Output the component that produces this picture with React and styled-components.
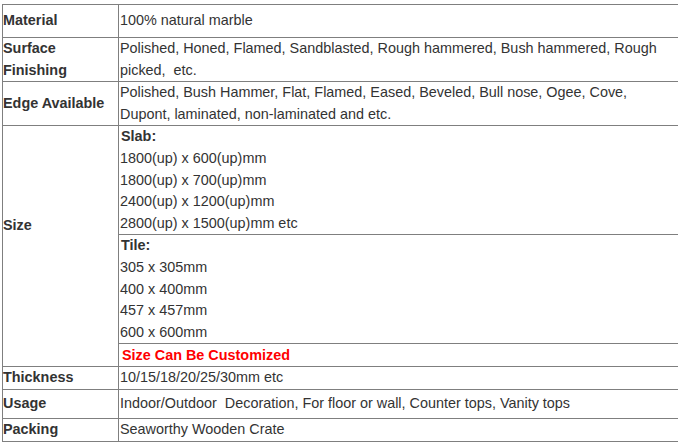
import React from 'react'
import styled, { createGlobalStyle } from 'styled-components'

const GlobalStyle = createGlobalStyle`
    html, body {
        margin: 0;
        padding: 0;
        background: #fff;
        overflow: hidden;
    }
    body {
        font-family: "Liberation Sans", Arial, sans-serif;
        font-size: 14.4px;
        color: #333;
    }
`

const Page = styled.div`
    padding: 4px 0 0 2px;
`

const Spec = styled.div`
    display: grid;
    grid-template-columns: 116px 1fr;
    width: 700px;
    border-top: 1px solid #7f7f7f;
    border-left: 1px solid #7f7f7f;
    line-height: 21.6px;
`

const Cell = styled.div`
    box-sizing: border-box;
    min-height: ${props => props.$h}px;
    border-right: 1px solid #7f7f7f;
    border-bottom: 1px solid #7f7f7f;
    display: flex;
    flex-direction: column;
    justify-content: center;
`

const Label = styled(Cell)`
    font-weight: bold;
    padding: 0 0 ${props => props.$lift || 0}px 0;
`

const Value = styled(Cell)`
    padding: 0 28px 0 1px;
    justify-content: ${props => props.$stack ? 'stretch' : 'center'};
`

const SizeBlock = styled.div`
    box-sizing: border-box;
    height: ${props => props.$h}px;
    border-bottom: ${props => props.$last ? 'none' : '1px solid #7f7f7f'};
    margin: 0 -28px 0 -1px;
    padding: 0 28px 0 1px;
    display: flex;
    flex-direction: column;
    justify-content: center;
`

const SubHead = styled.div`
    font-weight: bold;
    padding-left: 1px;
`

const Note = styled.div`
    font-weight: bold;
    color: #ff0000;
    padding-left: 2px;
`

const rows = [
    { label: 'Material', h: 33, value: '100% natural marble' },
    {
        label: 'Surface Finishing',
        h: 44,
        value: 'Polished, Honed, Flamed, Sandblasted, Rough hammered, Bush hammered, Rough picked,\u00a0 etc.',
    },
    {
        label: 'Edge Available',
        h: 44,
        value: 'Polished, Bush Hammer, Flat, Flamed, Eased, Beveled, Bull nose, Ogee, Cove, Dupont, laminated, non-laminated and etc.',
    },
]

const tail = [
    { label: 'Thickness', h: 22, value: '10/15/18/20/25/30mm etc' },
    {
        label: 'Usage',
        h: 29,
        value: 'Indoor/Outdoor\u00a0 Decoration, For floor or wall, Counter tops, Vanity tops',
    },
    { label: 'Packing', h: 23, value: 'Seaworthy Wooden Crate' },
]

const slabs = ['1800(up) x 600(up)mm', '1800(up) x 700(up)mm', '2400(up) x 1200(up)mm', '2800(up) x 1500(up)mm etc']
const tiles = ['305 x 305mm', '400 x 400mm', '457 x 457mm', '600 x 600mm']

export default function App() {
    return (
        <Page>
            <GlobalStyle />
            <Spec>
                {rows.map(r => (
                    <React.Fragment key={r.label}>
                        <Label $h={r.h}>{r.label === 'Surface Finishing' ? <>Surface<br />Finishing</> : r.label}</Label>
                        <Value $h={r.h}>{r.value}</Value>
                    </React.Fragment>
                ))}

                <Label $h={241} $lift={42}>Size</Label>
                <Value $h={241} $stack>
                    <SizeBlock $h={109}>
                        <SubHead>Slab:</SubHead>
                        {slabs.map(s => <div key={s}>{s}</div>)}
                    </SizeBlock>
                    <SizeBlock $h={109}>
                        <SubHead>Tile:</SubHead>
                        {tiles.map(t => <div key={t}>{t}</div>)}
                    </SizeBlock>
                    <SizeBlock $h={22} $last>
                        <Note>Size Can Be Customized</Note>
                    </SizeBlock>
                </Value>

                {tail.map(r => (
                    <React.Fragment key={r.label}>
                        <Label $h={r.h}>{r.label}</Label>
                        <Value $h={r.h}>{r.value}</Value>
                    </React.Fragment>
                ))}
            </Spec>
        </Page>
    )
}
